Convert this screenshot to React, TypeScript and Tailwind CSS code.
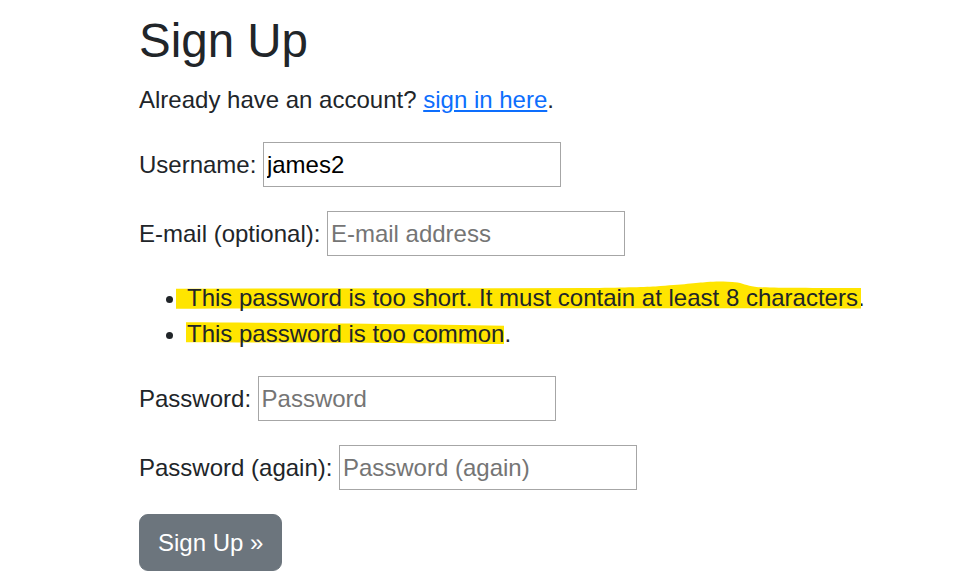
import React from 'react';

const font = { fontFamily: '"Liberation Sans", Arial, sans-serif' };

function Field({ label, type = 'text', placeholder, value }: { label: string; type?: string; placeholder?: string; value?: string }) {
  return (
    <p className="flex items-center gap-[6.5px] h-[45px] mb-[24px]">
      <label>{label}</label>
      <input
        type={type}
        placeholder={placeholder}
        defaultValue={value}
        className="w-[298px] h-[45px] border border-[#a6a6a6] px-[3px] text-[24px] text-black placeholder:text-[#757575] outline-none"
      />
    </p>
  );
}

export default function App() {
  return (
    <div className="min-h-screen bg-white text-[#212529] text-[24px] leading-[36px] pl-[139px] pt-[12px]" style={font}>
      <h1 className="text-[47.5px] leading-[1.2] font-normal mb-[13px]">Sign Up</h1>
      <p className="mb-[24px]">
        Already have an account? <a href="#" className="text-[#0d6efd] underline">sign in here</a>.
      </p>

      <form>
        <Field label="Username:" value="james2" />
        <Field label="E-mail (optional):" type="email" placeholder="E-mail address" />

        <ul className="list-disc pl-[48px] mb-[24px]">
          <li className="relative">
            {/* marker highlight */}
            <svg className="absolute left-[-11px] top-0 w-[685px] h-[30px]" viewBox="0 0 1000 30" preserveAspectRatio="none">
              <path
                d="M0 8.7 L600 8 C650 7.5 680 7 700 6.4 C740 4.5 760 3 775 2 C790 1.2 800 1.2 820 2.5 C830 4 836 6.4 850 7.2 C880 8 920 8 1000 8 L1000 28.5 C700 28 300 28 0 28.7 Z"
                fill="#ffe500"
              />
            </svg>
            <span className="relative">This password is too short. It must contain at least 8 characters</span>.
          </li>
          <li className="relative">
            <svg className="absolute left-[-1px] top-[6px] w-[318px] h-[22px]" viewBox="0 0 1000 22" preserveAspectRatio="none">
              <path d="M0 0.3 C300 0.8 700 2 1000 3.7 L1000 22 C700 21 300 20.5 0 20.3 Z" fill="#ffe500" />
            </svg>
            <span className="relative">This password is too common</span>.
          </li>
        </ul>

        <Field label="Password:" type="password" placeholder="Password" />
        <Field label="Password (again):" type="password" placeholder="Password (again)" />

        <button
          type="submit"
          className="h-[57px] px-[18px] bg-[#6c757d] border-[1.5px] border-[#6c757d] text-white rounded-[9px] text-[24px] leading-[36px]"
        >
          Sign Up »
        </button>
      </form>
    </div>
  );
}
